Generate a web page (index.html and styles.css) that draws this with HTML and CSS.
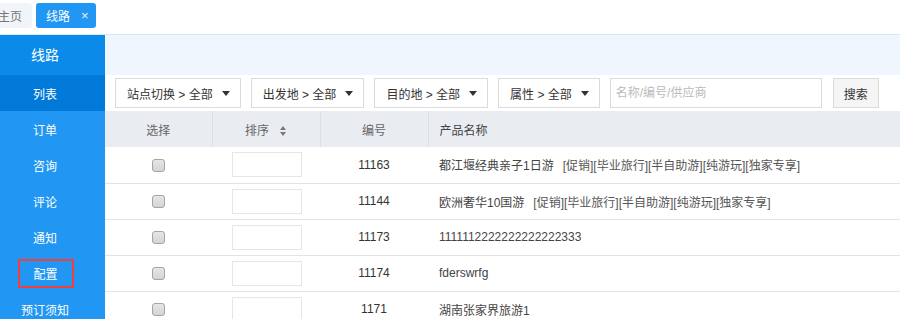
FILE: index.html
```html
<!DOCTYPE html>
<html lang="zh-CN">
<head>
	<meta charset="UTF-8">
	<title>线路列表</title>
	<link rel="stylesheet" href="styles.css">
</head>
<body>
	<!-- tabs -->
	<div class="tabs">
		<span class="tab">主页</span>
		<span class="tab tab-active">线路<i class="tab-close">×</i></span>
	</div>

	<div class="layout">
		<!-- 左侧菜单 -->
		<div class="side">
			<div class="side-head">线路</div>
			<a class="side-item side-active">列表</a>
			<a class="side-item">订单</a>
			<a class="side-item">咨询</a>
			<a class="side-item">评论</a>
			<a class="side-item">通知</a>
			<a class="side-item"><span class="mark">配置</span></a>
			<a class="side-item">预订须知</a>
		</div>

		<!-- 内容 -->
		<div class="main">
			<div class="banner"></div>

			<div class="filter">
				<div class="select">站点切换 &gt; 全部<i class="caret"></i></div>
				<div class="select">出发地 &gt; 全部<i class="caret"></i></div>
				<div class="select">目的地 &gt; 全部<i class="caret"></i></div>
				<div class="select">属性 &gt; 全部<i class="caret"></i></div>
				<input class="search-input" type="text" placeholder="名称/编号/供应商">
				<button class="search-btn">搜索</button>
			</div>

			<table class="list">
				<thead>
					<tr>
						<th class="col-check">选择</th>
						<th class="col-sort">排序<i class="sort-icon"></i></th>
						<th class="col-id">编号</th>
						<th class="col-name">产品名称</th>
					</tr>
				</thead>
				<tbody>
					<tr>
						<td class="col-check"><input class="check" type="checkbox"></td>
						<td class="col-sort"><input class="sort-input" type="text"></td>
						<td class="col-id">11163</td>
						<td class="col-name">都江堰经典亲子1日游<span class="tags">[促销][毕业旅行][半自助游][纯游玩][独家专享]</span></td>
					</tr>
					<tr>
						<td class="col-check"><input class="check" type="checkbox"></td>
						<td class="col-sort"><input class="sort-input" type="text"></td>
						<td class="col-id">11144</td>
						<td class="col-name">欧洲奢华10国游<span class="tags">[促销][毕业旅行][半自助游][纯游玩][独家专享]</span></td>
					</tr>
					<tr>
						<td class="col-check"><input class="check" type="checkbox"></td>
						<td class="col-sort"><input class="sort-input" type="text"></td>
						<td class="col-id">11173</td>
						<td class="col-name">1111112222222222222333</td>
					</tr>
					<tr>
						<td class="col-check"><input class="check" type="checkbox"></td>
						<td class="col-sort"><input class="sort-input" type="text"></td>
						<td class="col-id">11174</td>
						<td class="col-name">fderswrfg</td>
					</tr>
					<tr>
						<td class="col-check"><input class="check" type="checkbox"></td>
						<td class="col-sort"><input class="sort-input" type="text"></td>
						<td class="col-id">1171</td>
						<td class="col-name">湖南张家界旅游1</td>
					</tr>
				</tbody>
			</table>
		</div>
	</div>
</body>
</html>
```

FILE: styles.css
```css
html,
body {
	margin: 0;
	padding: 0;
	overflow: hidden;
	font-family: "Liberation Sans", "Noto Sans CJK SC", sans-serif;
	font-size: 12px;
	color: #333;
	background: #fff;
}

* {
	box-sizing: border-box;
}

/* 顶部标签 */
.tabs {
	height: 35px;
	padding-top: 3px;
	display: flex;
	gap: 4px;
	border-bottom: 1px solid #dce7f4;
}

.tab {
	display: flex;
	align-items: center;
	height: 25px;
	padding: 0 10px;
	border-radius: 3px;
	background: #f1f4f9;
	color: #777;
}

.tab:first-child {
	margin-left: -12px;
}

.tab-active {
	background: #2196f3;
	color: #fff;
	padding-right: 7px;
}

.tab-close {
	font-style: normal;
	margin-left: 11px;
	font-size: 13px;
	color: #e6f2fd;
}

/* 主体 */
.layout {
	display: flex;
}

.side {
	width: 105px;
	flex-shrink: 0;
	background: #2196f3;
	height: 290px;
}

.side-head {
	height: 40px;
	line-height: 40px;
	padding-right: 15px;
	text-align: center;
	background: #0b8aea;
	color: #fff;
	font-size: 14px;
}

.side-item {
	display: flex;
	align-items: center;
	justify-content: center;
	height: 36px;
	padding-right: 15px;
	color: #fff;
	font-size: 12px;
}

.side-active {
	background: #0079d8;
}

.mark {
	display: flex;
	align-items: center;
	justify-content: center;
	width: 56px;
	height: 29px;
	margin-left: 1px;
	border: 2px solid #f0403c;
}

.main {
	flex: 1;
	min-width: 0;
}

.banner {
	height: 40px;
	background: #eff6fe;
}

/* 筛选 */
.filter {
	display: flex;
	align-items: center;
	height: 36px;
	padding-left: 10px;
	gap: 10px;
}

.select {
	display: flex;
	align-items: center;
	height: 30px;
	padding: 0 10px 0 11px;
	border: 1px solid #dcdcdc;
	color: #333;
}

.caret {
	margin-left: 9px;
	width: 0;
	height: 0;
	border-left: 4px solid transparent;
	border-right: 4px solid transparent;
	border-top: 5px solid #333;
}

.search-input {
	width: 212px;
	height: 30px;
	padding: 0 5px;
	border: 1px solid #dcdcdc;
	outline: none;
	font-family: inherit;
	font-size: 12px;
}

.search-input::placeholder {
	color: #bbb;
}

.search-btn {
	height: 30px;
	width: 46px;
	margin-left: 1px;
	border: 1px solid #dcdcdc;
	background: #f5f5f5;
	color: #333;
	font-family: inherit;
	font-size: 12px;
	padding: 0;
}

/* 列表 */
.list {
	width: 100%;
	border-collapse: collapse;
	table-layout: fixed;
}

.list th {
	height: 36px;
	padding: 0;
	background: #e9ecf1;
	color: #666;
	font-weight: normal;
	border-left: 1px solid #dcdfe4;
}

.list th:first-child {
	border-left: none;
}

.list td {
	height: 36px;
	padding: 0;
	border-bottom: 1px solid #e3e3e3;
	color: #333;
}

.col-check {
	width: 107px;
	text-align: center;
}

.col-sort {
	width: 108px;
	text-align: center;
}

.col-id {
	width: 108px;
	text-align: center;
}

.list .col-name {
	text-align: left;
	padding-left: 11px;
	color: #444;
}

.sort-icon {
	display: inline-block;
	position: relative;
	width: 7px;
	height: 10px;
	margin-left: 11px;
	vertical-align: -1px;
}

.sort-icon::before,
.sort-icon::after {
	content: "";
	position: absolute;
	left: 0;
	border-left: 3.5px solid transparent;
	border-right: 3.5px solid transparent;
}

.sort-icon::before {
	top: 0;
	border-bottom: 4px solid #777;
}

.sort-icon::after {
	bottom: 0;
	border-top: 4px solid #777;
}

.check {
	-webkit-appearance: none;
	appearance: none;
	width: 13px;
	height: 13px;
	margin: 0;
	vertical-align: middle;
	border: 1px solid #a5a5a5;
	border-radius: 3px;
	background: linear-gradient(#e6e6e6, #d4d4d4);
}

.sort-input {
	width: 70px;
	height: 25px;
	margin-left: 1px;
	border: 1px solid #e6e6e6;
	outline: none;
	vertical-align: middle;
}

.tags {
	margin-left: 9px;
	color: #555;
}
```
